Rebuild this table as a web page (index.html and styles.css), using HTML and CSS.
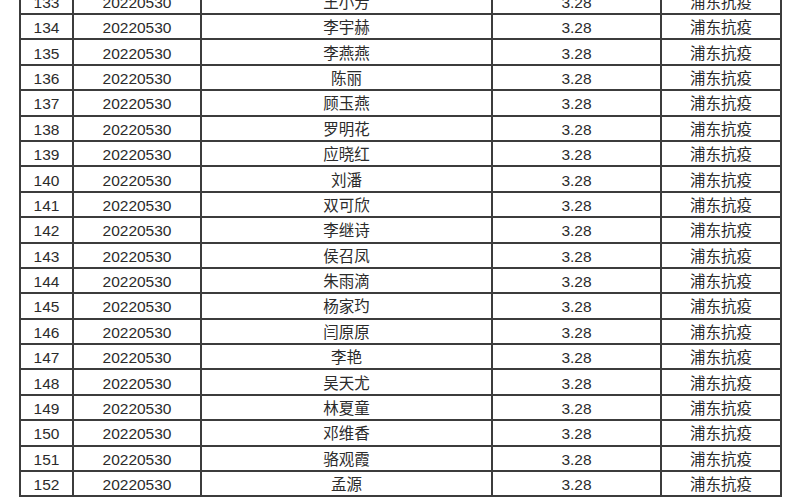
FILE: index.html
```html
<!DOCTYPE html>
<html lang="zh-CN">
<head>
<meta charset="utf-8">
<title>名单</title>
<link rel="stylesheet" href="styles.css">
</head>
<body>
<table class="list">
<colgroup><col class="c-no"><col class="c-date"><col class="c-name"><col class="c-amt"><col class="c-note"></colgroup>
<tbody>
<tr><td>133</td><td>20220530</td><td>王小芳</td><td>3.28</td><td>浦东抗疫</td></tr>
<tr><td>134</td><td>20220530</td><td>李宇赫</td><td>3.28</td><td>浦东抗疫</td></tr>
<tr><td>135</td><td>20220530</td><td>李燕燕</td><td>3.28</td><td>浦东抗疫</td></tr>
<tr><td>136</td><td>20220530</td><td>陈丽</td><td>3.28</td><td>浦东抗疫</td></tr>
<tr><td>137</td><td>20220530</td><td>顾玉燕</td><td>3.28</td><td>浦东抗疫</td></tr>
<tr><td>138</td><td>20220530</td><td>罗明花</td><td>3.28</td><td>浦东抗疫</td></tr>
<tr><td>139</td><td>20220530</td><td>应晓红</td><td>3.28</td><td>浦东抗疫</td></tr>
<tr><td>140</td><td>20220530</td><td>刘潘</td><td>3.28</td><td>浦东抗疫</td></tr>
<tr><td>141</td><td>20220530</td><td>双可欣</td><td>3.28</td><td>浦东抗疫</td></tr>
<tr><td>142</td><td>20220530</td><td>李继诗</td><td>3.28</td><td>浦东抗疫</td></tr>
<tr><td>143</td><td>20220530</td><td>侯召凤</td><td>3.28</td><td>浦东抗疫</td></tr>
<tr><td>144</td><td>20220530</td><td>朱雨滴</td><td>3.28</td><td>浦东抗疫</td></tr>
<tr><td>145</td><td>20220530</td><td>杨家玓</td><td>3.28</td><td>浦东抗疫</td></tr>
<tr><td>146</td><td>20220530</td><td>闫原原</td><td>3.28</td><td>浦东抗疫</td></tr>
<tr><td>147</td><td>20220530</td><td>李艳</td><td>3.28</td><td>浦东抗疫</td></tr>
<tr><td>148</td><td>20220530</td><td>吴天尤</td><td>3.28</td><td>浦东抗疫</td></tr>
<tr><td>149</td><td>20220530</td><td>林夏童</td><td>3.28</td><td>浦东抗疫</td></tr>
<tr><td>150</td><td>20220530</td><td>邓维香</td><td>3.28</td><td>浦东抗疫</td></tr>
<tr><td>151</td><td>20220530</td><td>骆观霞</td><td>3.28</td><td>浦东抗疫</td></tr>
<tr><td>152</td><td>20220530</td><td>孟源</td><td>3.28</td><td>浦东抗疫</td></tr>
</tbody>
</table>
</body>
</html>
```
FILE: styles.css
```css
html, body {
  margin: 0;
  padding: 0;
  background: #ffffff;
  overflow: hidden;
}
body {
  font-family: "Liberation Sans", Arial, "Noto Sans CJK SC", sans-serif;
  font-size: 15.5px;
  color: #2b2b2b;
}
.list {
  border-collapse: collapse;
  table-layout: fixed;
  margin: -12.4px 0 0 19px;
  width: 763px;
}
.c-no { width: 53px; }
.c-date { width: 128px; }
.c-name { width: 291px; }
.c-amt { width: 169px; }
.c-note { width: 120px; }
.list td {
  border: 2px solid #3c3c3c;
  height: 25.4px;
  padding: 3px 0 0 0;
  box-sizing: border-box;
  text-align: center;
  vertical-align: middle;
  line-height: 18px;
  white-space: nowrap;
}
```
